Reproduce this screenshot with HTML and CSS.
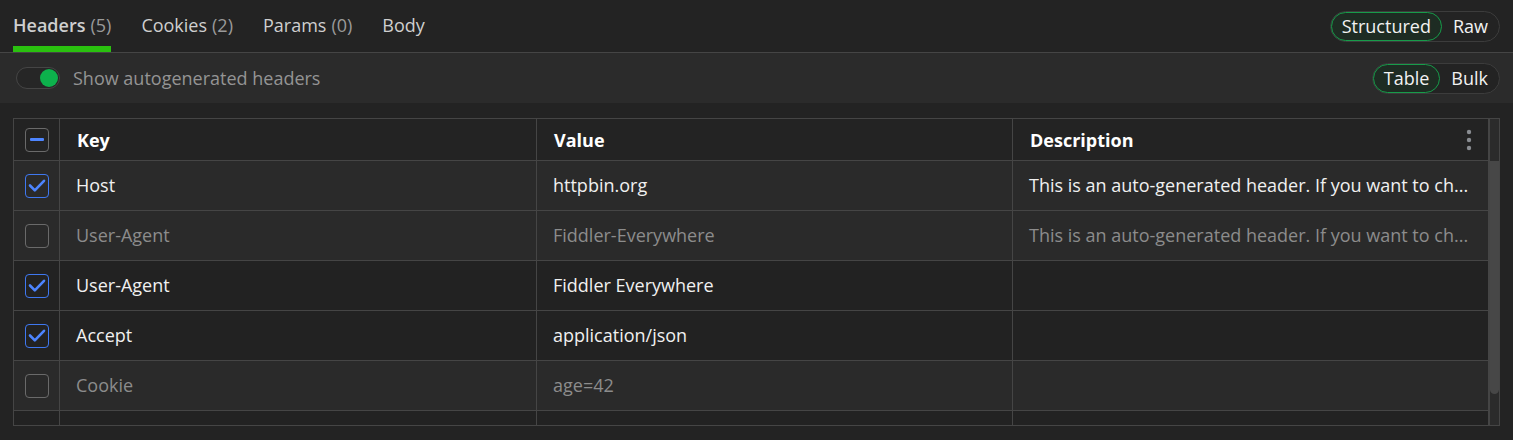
FILE: index.html
```html
<!DOCTYPE html>
<html>
<head>
<meta charset="utf-8">
<link rel="stylesheet" href="styles.css">
</head>
<body>
<div class="tabs">
  <div class="tab active">Headers <span class="count">(5)</span></div>
  <div class="tab">Cookies <span class="count">(2)</span></div>
  <div class="tab">Params <span class="count">(0)</span></div>
  <div class="tab">Body</div>
  <div class="spacer"></div>
  <div class="seg seg-top">
    <span class="seg-item on">Structured</span>
    <span class="seg-item">Raw</span>
  </div>
</div>
<div class="toolbar">
  <div class="toggle"><span class="knob"></span></div>
  <span class="toggle-label">Show autogenerated headers</span>
  <div class="spacer"></div>
  <div class="seg">
    <span class="seg-item on">Table</span>
    <span class="seg-item">Bulk</span>
  </div>
</div>
<div class="content">
  <div class="table">
    <div class="grid">
      <div class="row head">
        <div class="cell chk"><span class="cb"><span class="dash"></span></span></div>
        <div class="cell">Key</div>
        <div class="cell">Value</div>
        <div class="cell desc-head">Description
          <svg class="kebab" width="6" height="22" viewBox="0 0 6 22"><circle cx="3" cy="3" r="2.2" fill="#8a8d92"/><circle cx="3" cy="11" r="2.2" fill="#8a8d92"/><circle cx="3" cy="19" r="2.2" fill="#8a8d92"/></svg>
        </div>
      </div>
      <div class="row alt">
        <div class="cell chk"><span class="cb checked"><svg width="18" height="15" viewBox="0 0 18 15"><path d="M2 7.5 L6.8 12.3 L16 2.8" fill="none" stroke="#4d85ff" stroke-width="2.6" stroke-linecap="round" stroke-linejoin="round"/></svg></span></div>
        <div class="cell">Host</div>
        <div class="cell">httpbin.org</div>
        <div class="cell">This is an auto-generated header. If you want to ch...</div>
      </div>
      <div class="row alt dim">
        <div class="cell chk"><span class="cb"></span></div>
        <div class="cell">User-Agent</div>
        <div class="cell">Fiddler-Everywhere</div>
        <div class="cell">This is an auto-generated header. If you want to ch...</div>
      </div>
      <div class="row">
        <div class="cell chk"><span class="cb checked"><svg width="18" height="15" viewBox="0 0 18 15"><path d="M2 7.5 L6.8 12.3 L16 2.8" fill="none" stroke="#4d85ff" stroke-width="2.6" stroke-linecap="round" stroke-linejoin="round"/></svg></span></div>
        <div class="cell">User-Agent</div>
        <div class="cell">Fiddler Everywhere</div>
        <div class="cell"></div>
      </div>
      <div class="row">
        <div class="cell chk"><span class="cb checked"><svg width="18" height="15" viewBox="0 0 18 15"><path d="M2 7.5 L6.8 12.3 L16 2.8" fill="none" stroke="#4d85ff" stroke-width="2.6" stroke-linecap="round" stroke-linejoin="round"/></svg></span></div>
        <div class="cell">Accept</div>
        <div class="cell">application/json</div>
        <div class="cell"></div>
      </div>
      <div class="row alt dim">
        <div class="cell chk"><span class="cb"></span></div>
        <div class="cell">Cookie</div>
        <div class="cell">age=42</div>
        <div class="cell"></div>
      </div>
      <div class="row">
        <div class="cell chk"></div>
        <div class="cell"></div>
        <div class="cell"></div>
        <div class="cell"></div>
      </div>
    </div>
    <div class="scroll"><div class="thumb"></div></div>
  </div>
</div>
</body>
</html>
```

FILE: styles.css
```css
* { box-sizing: border-box; }
html, body { margin: 0; padding: 0; }
body {
  background: #232323;
  color: #e8e8e8;
  font-family: "Open Sans", "Noto Sans", sans-serif;
  font-size: 18px;
  width: 1513px;
  height: 440px;
  overflow: hidden;
}
.spacer { flex: 1; }
.tabs {
  height: 53px;
  display: flex;
  align-items: stretch;
  gap: 30px;
  padding: 0 13px;
  border-bottom: 1px solid #454545;
  background: #232323;
}
.tab {
  display: flex;
  align-items: center;
  padding-bottom: 3px;
  color: #cfcfcf;
  font-size: 18px;
  border-bottom: 6px solid transparent;
  padding-top: 6px;
}
.tab.active {
  font-weight: 600;
  border-bottom-color: #2ac10f;
}
.tab .count { color: #9a9a9a; font-weight: 400; margin-left: 5px; }
.seg-top { align-self: center; }
.seg {
  display: flex;
  align-items: center;
  height: 31px;
  border: 1px solid #3c3c3c;
  border-radius: 16px;
  background: #232323;
}
.seg-item {
  height: 29px;
  display: flex;
  align-items: center;
  padding: 0 10px;
  font-size: 18px;
  color: #f2f2f2;
  border: 1px solid transparent;
  border-radius: 15px;
}
.seg-item.on {
  border-color: #179c4a;
  background: #1e2c23;
}
.toolbar {
  height: 50px;
  display: flex;
  align-items: center;
  padding: 0 13px 0 16px;
  background: #2b2b2b;
}
.toggle {
  width: 44px;
  height: 22px;
  border: 1px solid #454545;
  border-radius: 11px;
  background: #262626;
  position: relative;
}
.knob {
  position: absolute;
  right: 1px;
  top: 1px;
  width: 18px;
  height: 18px;
  border-radius: 50%;
  background: #0db14c;
}
.toggle-label {
  margin-left: 13px;
  color: #949494;
  font-size: 18px;
}
.content {
  padding: 15px 13px 0 13px;
}
.table {
  height: 308px;
  border: 1px solid #454545;
  display: flex;
  overflow: hidden;
}
.grid { flex: 1; }
.row {
  display: grid;
  grid-template-columns: 46px 477px 476px 476px;
  height: 50px;
  border-bottom: 1px solid #454545;
  background: #222222;
}
.row.head { height: 42px; background: #232323; }
.row.alt { background: #2a2a2a; }
.cell {
  border-right: 1px solid #454545;
  display: flex;
  align-items: center;
  padding: 0 16px;
  font-size: 18px;
  color: #f0f0f0;
  white-space: nowrap;
  overflow: hidden;
  min-width: 0;
}
.cell:not(.chk) { display: block; line-height: 49px; }
.row.head .cell:not(.chk) { line-height: 43px; font-weight: 700; color: #ffffff; padding-left: 17px; }
.row.dim .cell { color: #8c8c8c; }
.cell.chk { padding: 0 0 0 11px; }
.desc-head { position: relative; }
.kebab { position: absolute; right: 16px; top: 10px; }
.cb {
  width: 24px;
  height: 24px;
  border: 1px solid #6a6a6a;
  border-radius: 4px;
  display: flex;
  align-items: center;
  justify-content: center;
  background: transparent;
}
.cb.checked { border-color: #3f78f0; }
.dash { width: 14px; height: 3px; background: #4d85ff; border-radius: 1px; }
.scroll {
  width: 11px;
  border-left: 1px solid #454545;
  background: #2b2b2b;
  padding-top: 42px;
}
.thumb {
  height: 233px;
  background: #474747;
  border-radius: 0 0 5px 5px;
}
```
